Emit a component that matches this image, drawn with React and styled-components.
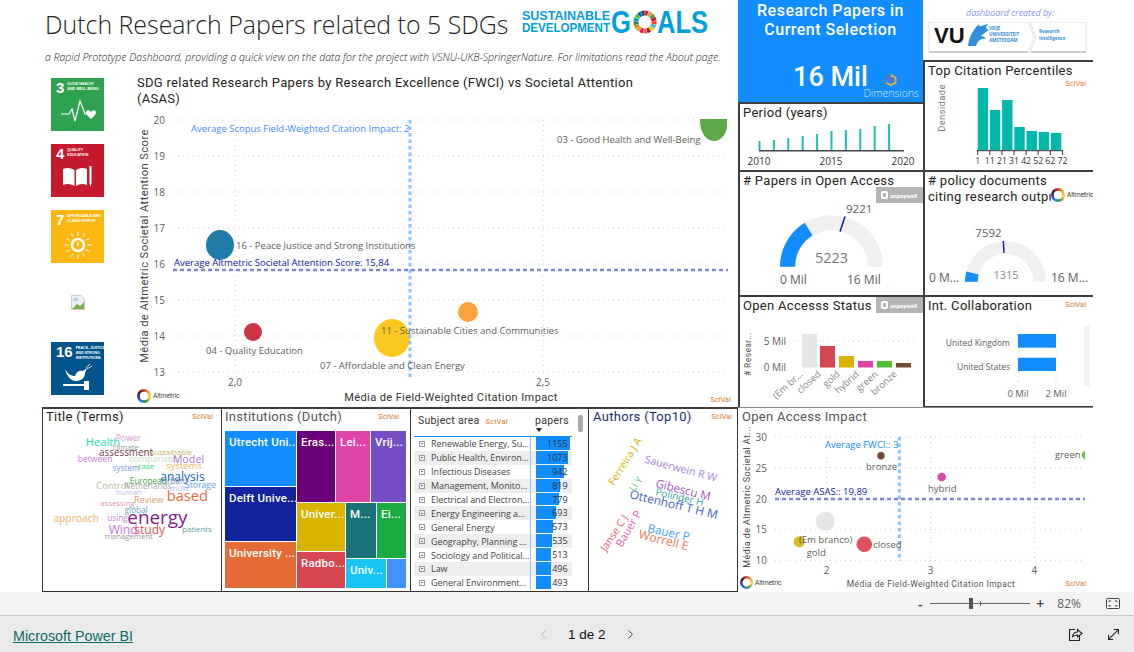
import React from 'react';
import styled, { createGlobalStyle } from 'styled-components';
import { MoveDiagonal, ChevronLeft, ChevronRight } from 'lucide-react';

const DIN = '"Roboto", "Liberation Sans", sans-serif';
const SEGOE = '"Open Sans", "Noto Sans", sans-serif';
const ARIAL = '"Liberation Sans", sans-serif';
const THICK = '2px solid #3f3f3f';
const THIN = '1px solid #333333';

const GlobalStyle = createGlobalStyle`
  html, body { margin: 0; padding: 0; background: #fff; overflow: hidden; }
  * { box-sizing: border-box; }
`;

const Page = styled.div`
  width: 1134px;
  height: 652px;
  display: flex;
  flex-direction: column;
  font-family: ${SEGOE};
`;

const Canvas = styled.div`
  height: 592px;
  display: flex;
  flex-direction: column;
  background: #fff;
`;

const TopRow = styled.div`
  height: 407px;
  display: flex;
`;

const LeftTop = styled.div`
  width: 738px;
  display: flex;
  flex-direction: column;
`;

const Header = styled.div`
  height: 45px;
  display: flex;
  align-items: flex-start;
  padding: 7px 0 0 45px;
`;

const PageTitle = styled.h1`
  margin: 0;
  width: 476px;
  font-family: ${SEGOE};
  font-weight: 300;
  font-size: 24.9px;
  line-height: 35px;
  color: #252423;
  white-space: nowrap;
`;

const Subtitle = styled.div`
  height: 27px;
  padding: 5px 0 0 45px;
  font-weight: 300;
  font-style: italic;
  font-size: 10.5px;
  line-height: 14px;
  color: #252423;
  white-space: nowrap;
`;

const MainBody = styled.div`
  height: 335px;
  display: flex;
`;

const SdgColumn = styled.div`
  width: 135px;
  padding: 6px 0 0 51px;
  display: flex;
  flex-direction: column;
  gap: 13px;
`;

const Tile = styled.div`
  width: 53px;
  height: 53px;
  padding: 2px 4px 0 5px;
  background: ${(p) => p.$bg};
  color: #fff;
  display: flex;
  flex-direction: column;
`;

const TileHead = styled.div`
  display: flex;
  gap: 3px;
  height: 19px;
  flex: none;
`;

const TileNum = styled.span`
  font-family: ${ARIAL};
  font-weight: 700;
  font-size: 15px;
  line-height: 16px;
`;

const TileLabel = styled.span`
  font-family: ${ARIAL};
  font-weight: 700;
  font-size: 3.6px;
  line-height: 5px;
  padding-top: 2px;
  white-space: nowrap;
`;

const TileIcon = styled.svg`
  display: block;
  align-self: center;
  flex: none;
`;

const BrokenSlot = styled.div`
  width: 53px;
  height: 53px;
  display: flex;
  align-items: center;
  justify-content: center;
`;

const MainChart = styled.div`
  position: relative;
  width: 603px;
  display: flex;
  flex-direction: column;
`;

const RightArea = styled.div`
  display: flex;
`;

const RightCol = styled.div`
  width: ${(p) => p.$w}px;
  display: flex;
  flex-direction: column;
`;

const Panel = styled.div`
  position: relative;
  overflow: hidden;
  width: ${(p) => p.$w}px;
  height: ${(p) => p.$h}px;
  flex: none;
  display: flex;
  flex-direction: column;
  background: #fff;
  border-top: ${(p) => p.$top || 'none'};
  border-left: ${(p) => p.$left || 'none'};
  border-bottom: ${(p) => p.$bottom || 'none'};
  border-right: ${(p) => p.$right || 'none'};
`;

const PanelTitle = styled.div`
  font-family: ${DIN};
  font-size: 13px;
  letter-spacing: 0.3px;
  line-height: 16px;
  padding: ${(p) => p.$pad || '1px 0 1px 3px'};
  color: ${(p) => p.$color || '#252423'};
  flex: none;
`;

const Kpi = styled.div`
  position: relative;
  width: 185px;
  height: 102px;
  background: #118dff;
  color: #fff;
  display: flex;
  flex-direction: column;
  align-items: center;
`;

const KpiTitle = styled.div`
  font-family: ${DIN};
  font-weight: 500;
  font-size: 16px;
  letter-spacing: 0.5px;
  line-height: 19px;
  padding-top: 1px;
  text-align: center;
`;

const KpiValue = styled.div`
  font-family: ${DIN};
  font-weight: 500;
  font-size: 27px;
  line-height: 34px;
  padding-top: 21px;
`;

const Dimensions = styled.div`
  position: absolute;
  right: 4px;
  bottom: 3px;
  display: flex;
  flex-direction: column;
  align-items: center;
  gap: 2px;
  font-family: ${SEGOE};
  font-weight: 300;
  font-size: 10.5px;
  line-height: 11px;
  color: #dcebff;
`;

const DimensionsMark = styled.svg`
  display: block;
`;

const Credit = styled.div`
  width: 170px;
  height: 60px;
  display: flex;
  flex-direction: column;
  align-items: flex-start;
  padding: 6px 0 0 5px;
  background: #fff;
`;

const CreditText = styled.div`
  font-family: ${SEGOE};
  font-weight: 300;
  font-style: italic;
  font-size: 9px;
  line-height: 13px;
  color: #3f63f0;
  padding: 0 0 3px 38px;
`;

const SciVal = styled.span`
  position: absolute;
  top: ${(p) => p.$t}px;
  right: ${(p) => p.$r}px;
  font-family: ${DIN};
  font-size: 7.5px;
  line-height: 9px;
  color: #e07a2e;
`;

const Paywall = styled.div`
  position: absolute;
  top: ${(p) => p.$t}px;
  right: 0;
  width: 47px;
  height: 16px;
  background: #b4b4b4;
  color: #fff;
  display: flex;
  align-items: center;
  gap: 2px;
  padding-left: 5px;
  font-family: ${DIN};
  font-weight: 700;
  font-size: 6px;
`;

const PaywallDot = styled.span`
  width: 7px;
  height: 8px;
  border-radius: 2px;
  border: 2px solid #fff;
`;

const Altmetric = styled.div`
  position: absolute;
  left: ${(p) => p.$l}px;
  ${(p) => (p.$b !== undefined ? `bottom: ${p.$b}px;` : `top: ${p.$t}px;`)}
  display: flex;
  align-items: center;
  gap: 2px;
  padding-right: 1px;
  background: #fff;
  font-family: ${DIN};
  font-size: 6.5px;
  color: #333;
`;

const AltRing = styled.span`
  width: ${(p) => p.$s}px;
  height: ${(p) => p.$s}px;
  border-radius: 50%;
  background:
    radial-gradient(circle, #fff 0 42%, transparent 46%),
    conic-gradient(#e53935, #f9a825, #fdd835, #43a047, #1e88e5, #5e35b1, #222, #e53935);
`;

const Chart = styled.svg`
  display: block;
  flex: none;
  text {
    font-family: ${SEGOE};
  }
`;

const LogoText = styled.text`
  && {
    font-family: ${ARIAL};
  }
  font-weight: 700;
  font-size: ${(p) => p.$size}px;
  fill: ${(p) => p.$color || '#00a0dc'};
`;

const AxisText = styled.text`
  font-size: ${(p) => p.$size || 10}px;
  fill: ${(p) => p.$color || '#605e5c'};
`;

const DinText = styled.text`
  && {
    font-family: ${DIN};
  }
  font-size: ${(p) => p.$size || 11}px;
  letter-spacing: ${(p) => p.$ls ?? 0.4}px;
  fill: ${(p) => p.$color || '#605e5c'};
`;

const BottomRow = styled.div`
  height: 185px;
  display: flex;
  padding-left: 42px;
`;

const Treemap = styled.div`
  width: 181px;
  height: 157px;
  margin: 1px 0 0 3px;
  display: flex;
  gap: 1px;
`;

const TreeCol = styled.div`
  width: ${(p) => p.$w}px;
  height: ${(p) => p.$h || 157}px;
  display: flex;
  flex-direction: column;
  gap: 1px;
`;

const TreeRow = styled.div`
  height: ${(p) => p.$h}px;
  display: flex;
  gap: 1px;
`;

const TreeCell = styled.div`
  flex: ${(p) => (p.$w ? `0 0 ${p.$w}px` : 'none')};
  height: ${(p) => p.$h}px;
  background: ${(p) => p.$bg};
  color: #fff;
  font-family: ${DIN};
  font-weight: 500;
  font-size: 11.5px;
  letter-spacing: 0.2px;
  line-height: 16px;
  padding: 3px 0 0 4px;
  overflow: hidden;
  white-space: nowrap;
`;

const TableHead = styled.div`
  position: relative;
  width: 158px;
  height: 28px;
  margin-left: 3px;
  display: flex;
  align-items: flex-start;
  padding-top: 5px;
  border-bottom: 1px solid #118dff;
  font-family: ${DIN};
  font-size: 10.5px;
  letter-spacing: 0.3px;
  line-height: 14px;
  color: #333;
`;

const SubjectHead = styled.span`
  width: 121px;
  padding-left: 4px;
`;

const Caret = styled.span`
  position: absolute;
  left: 122px;
  top: 19px;
  border-left: 3.5px solid transparent;
  border-right: 3.5px solid transparent;
  border-top: 4px solid #252423;
`;

const TableBody = styled.div`
  width: 158px;
  margin-left: 3px;
  display: flex;
  flex-direction: column;
`;

const Row = styled.div`
  height: 13.9px;
  display: grid;
  grid-template-columns: 17px 99px 1fr;
  align-items: center;
  background: ${(p) => (p.$alt ? '#eeeeee' : 'transparent')};
  font-size: 9px;
  letter-spacing: -0.05px;
  color: #444;
`;

const Expander = styled.span`
  width: 6px;
  height: 6px;
  margin-left: 5px;
  border: 1px solid #999;
  position: relative;
  &::after {
    content: '';
    position: absolute;
    left: 1px;
    right: 1px;
    top: 1.5px;
    height: 1px;
    background: #777;
  }
`;

const RowName = styled.span`
  overflow: hidden;
  text-overflow: ellipsis;
  white-space: nowrap;
`;

const ValueCell = styled.span`
  position: relative;
  height: 100%;
  border-left: 1px solid #8fc6ff;
  padding-right: 4.5px;
  text-align: right;
  line-height: 13.9px;
`;

const DataBar = styled.span`
  position: absolute;
  left: 5px;
  top: 0;
  bottom: 1px;
  background: #118dff;
`;

const ValueText = styled.span`
  position: relative;
  color: #333;
`;

const ScrollThumb = styled.span`
  position: absolute;
  left: 167px;
  top: 6px;
  width: 5px;
  height: 17px;
  border-radius: 2px;
  background: #a9a9a9;
`;

const ZoomBar = styled.div`
  height: 24px;
  background: #f3f3f3;
  border-bottom: 1px solid #c8c8c8;
  display: flex;
  align-items: center;
  justify-content: flex-end;
  padding-right: 14px;
  color: #444;
`;

const ZoomSign = styled.span`
  font-family: ${SEGOE};
  font-weight: 600;
  font-size: 14px;
  line-height: 14px;
  width: 12px;
  text-align: center;
`;

const Slider = styled.div`
  position: relative;
  width: 100px;
  height: 1px;
  margin: 0 4px;
  background: #666;
`;

const Thumb = styled.span`
  position: absolute;
  left: 39px;
  top: -5px;
  width: 4px;
  height: 11px;
  background: #555;
`;

const Tick = styled.span`
  position: absolute;
  left: 50px;
  top: -2px;
  width: 1px;
  height: 5px;
  background: #666;
`;

const ZoomValue = styled.span`
  font-size: 12px;
  margin: 0 25px 0 11px;
  color: #605e5c;
`;

const Footer = styled.div`
  position: relative;
  height: 36px;
  background: #eaeaea;
  display: flex;
  align-items: center;
  justify-content: space-between;
  padding: 0 12px 0 13px;
`;

const BiLink = styled.a`
  font-family: ${ARIAL};
  font-size: 14.3px;
  padding-top: 3px;
  color: #0f6b6b;
  text-decoration: underline;
`;

const Pager = styled.div`
  position: absolute;
  left: 536px;
  top: 0;
  height: 36px;
  display: flex;
  align-items: center;
  gap: 17px;
  font-family: ${ARIAL};
  font-size: 13.5px;
  color: #111;
`;

const FooterIcons = styled.div`
  display: flex;
  align-items: center;
  gap: 22px;
`;

const NavBtn = styled.span`
  display: flex;
  color: ${(p) => p.$color};
`;

/* helpers ------------------------------------------------------------ */

const Plot = ({ x, y, w, h, children }) => (
  <Chart width={w} height={h} viewBox={`${x} ${y} ${w} ${h}`}>
    {children}
  </Chart>
);

const arc = (cx, cy, ro, ri, f0, f1) => {
  const p = (r, f) => {
    const a = Math.PI * (1 - f);
    return `${(cx + r * Math.cos(a)).toFixed(2)} ${(cy - r * Math.sin(a)).toFixed(2)}`;
  };
  return `M${p(ro, f0)} A${ro} ${ro} 0 0 1 ${p(ro, f1)} L${p(ri, f1)} A${ri} ${ri} 0 0 0 ${p(ri, f0)} Z`;
};

const SDG_COLORS = ['#e5243b', '#dda63a', '#4c9f38', '#c5192d', '#ff3a21', '#26bde2', '#fcc30b', '#a21942', '#fd6925', '#dd1367', '#fd9d24', '#bf8b2e', '#3f7e44', '#0a97d9', '#56c02b', '#00689d', '#19486a'];

const SdgLogo = () => {
  const cx = 645;
  const cy = 22;
  const R = 11.5;
  const r = 6.5;
  return (
    <Chart width={187} height={38} viewBox="521 7 187 38">
      <LogoText x="522" y="20" $size={13} textLength="88" lengthAdjust="spacingAndGlyphs">SUSTAINABLE</LogoText>
      <LogoText x="522" y="32" $size={13} textLength="88" lengthAdjust="spacingAndGlyphs">DEVELOPMENT</LogoText>
      <LogoText transform="translate(611 33) scale(0.8 1)" $size={32}>G</LogoText>
      {SDG_COLORS.map((c, i) => {
        const a0 = (i / 17) * Math.PI * 2 - Math.PI / 2;
        const a1 = ((i + 0.9) / 17) * Math.PI * 2 - Math.PI / 2;
        const d = `M${cx + R * Math.cos(a0)} ${cy + R * Math.sin(a0)} A${R} ${R} 0 0 1 ${cx + R * Math.cos(a1)} ${cy + R * Math.sin(a1)} L${cx + r * Math.cos(a1)} ${cy + r * Math.sin(a1)} A${r} ${r} 0 0 0 ${cx + r * Math.cos(a0)} ${cy + r * Math.sin(a0)} Z`;
        return <path key={i} d={d} fill={c} />;
      })}
      <LogoText x="657" y="33" $size={32} textLength="51" lengthAdjust="spacingAndGlyphs">ALS</LogoText>
    </Chart>
  );
};

const VuLogo = () => (
  <Chart width={160} height={32} viewBox="0 0 160 32">
    <path d="M1 0H100L106 15L100 30H1Z" fill="#fff" stroke="#e2e2e2" />
    <path d="M102 0H158V30H102L108 15Z" fill="#fff" stroke="#e2e2e2" />
    <rect x="1" y="29" width="99" height="2" fill="#ccc" />
    <rect x="103" y="29" width="55" height="2" fill="#ccc" />
    <LogoText x="6" y="21" $size={22} $color="#111">VU</LogoText>
    <path d="M40 24C41 15 45 8 51 2C50 6 53 4 60 2C56 7 59 7 61 8C57 10 55 13 52 14C55 14 57 15 58 17C53 16 50 18 48 24Z" fill="#2f8fd8" />
    <g fill="#2f8fd8" fontSize="4.5" fontWeight="700">
      <text x="61" y="8">VRIJE</text>
      <text x="61" y="14">UNIVERSITEIT</text>
      <text x="61" y="20">AMSTERDAM</text>
      <text x="111" y="11">Research</text>
      <text x="111" y="18">Intelligence</text>
    </g>
  </Chart>
);

const HeartIcon = () => (
  <TileIcon width="36" height="26" viewBox="0 0 36 26">
    <path d="M1 15H9L12 10L15 22L20 2L25 15H27" fill="none" stroke="#fff" strokeWidth="1.2" />
    <path d="M31 20C28 17 26 15.5 26 13.5C26 11 29 10.5 31 13C33 10.5 36 11 36 13.5C36 15.5 34 17 31 20Z" fill="#fff" />
  </TileIcon>
);

const BookIcon = () => (
  <TileIcon width="30" height="24" viewBox="0 0 30 24">
    <path d="M0 4C4 2 8 3 11.5 5V21C8 19 4 18 0 20ZM13 5C16 3 20 2 24 4V20C20 18 16 19 13 21Z" fill="#fff" />
    <path d="M26.5 1H28.5V18L27.5 22L26.5 18Z" fill="#fff" />
  </TileIcon>
);

const SunIcon = () => (
  <TileIcon width="30" height="28" viewBox="0 0 30 28">
    <circle cx="15" cy="14" r="6" fill="none" stroke="#fff" strokeWidth="2.5" />
    <path d="M15 11V15" stroke="#fff" strokeWidth="1.5" />
    {Array.from({ length: 12 }).map((_, i) => {
      const a = (i / 12) * Math.PI * 2;
      return <line key={i} x1={15 + 9.5 * Math.cos(a)} y1={14 + 9.5 * Math.sin(a)} x2={15 + 13.5 * Math.cos(a)} y2={14 + 13.5 * Math.sin(a)} stroke="#fff" strokeWidth="1" />;
    })}
  </TileIcon>
);

const DoveIcon = () => (
  <TileIcon width="30" height="27" viewBox="0 0 30 27">
    <path d="M2 6C5 11 8 13 12 13C13 9 16 7 20 8L24 5L22 10C22 15 18 18 13 18C8 18 4 14 2 6Z" fill="#fff" />
    <path d="M0 21H21V23H0Z" fill="#fff" />
    <path d="M21 18H26V27H21Z" fill="#fff" />
    <path d="M23 5L27 1M24 6L29 3" stroke="#fff" strokeWidth="0.8" />
  </TileIcon>
);

const BrokenImage = () => (
  <svg width="14" height="15" viewBox="0 0 14 15">
    <path d="M0.5 0.5H10L13.5 4V14.5H0.5Z" fill="#eef2f6" stroke="#c8ccd0" />
    <path d="M1 14L6 9L9 11L13 7V14Z" fill="#7fae4e" />
    <path d="M2 3H7V6H2Z" fill="#b9d0ea" />
  </svg>
);

const FitIcon = () => (
  <svg width="14" height="11" viewBox="0 0 14 11" fill="none" stroke="#444" strokeWidth="1">
    <rect x="0.5" y="0.5" width="13" height="10" rx="1" />
    <path d="M3 4V3H5M9 3H11V4M11 7V8H9M5 8H3V7" />
  </svg>
);

const ShareIcon = () => (
  <svg width="15" height="15" viewBox="0 0 15 15" fill="none" stroke="#222" strokeWidth="1.1">
    <path d="M7 2.5H1.5V13.5H11.5V9" />
    <path d="M4.5 9.5C5 6.5 7 5 9.5 5V2.5L14 6.5L9.5 10V8C7.5 8 6 8.5 4.5 9.5Z" />
  </svg>
);

const AltBadge = ({ l, t, b, s }) => (
  <Altmetric $l={l} $t={t} $b={b}>
    <AltRing $s={s} />
    Altmetric
  </Altmetric>
);

/* data --------------------------------------------------------------- */

const BUBBLES = [
  { cx: 714, cy: 121, rx: 14, ry: 20, c: '#5da74a' },
  { cx: 220, cy: 245, rx: 14, ry: 15, c: '#1f7ba8' },
  { cx: 253, cy: 332, rx: 9, ry: 9, c: '#cf3244' },
  { cx: 392, cy: 338, rx: 18, ry: 19, c: '#fdc820' },
  { cx: 468, cy: 312, rx: 10, ry: 10, c: '#fda53a' },
];

const MAIN_LABELS = [
  { x: 557, y: 143, t: '03 - Good Health and Well-Being' },
  { x: 236, y: 249, t: '16 - Peace Justice and Strong Institutions' },
  { x: 381, y: 334, t: '11 - Sustainable Cities and Communities' },
  { x: 206, y: 354, t: '04 - Quality Education' },
  { x: 320, y: 369, t: '07 - Affordable and Clean Energy' },
];

const CITATION_BARS = [88, 110, 100, 127, 131, 132, 133];
const CITATION_TICKS = ['1', '11', '21', '31', '42', '52', '62', '72'];
const PERIOD_BARS = [141, 140, 138, 136, 134, 131, 130, 129, 126, 124];

const OA_BARS = [
  { x: 802, w: 15, top: 334, c: '#e6e6e6', l: '(Em br...' },
  { x: 820, w: 15, top: 346, c: '#d64550', l: 'closed' },
  { x: 839, w: 15, top: 356, c: '#d9b300', l: 'gold' },
  { x: 858, w: 15, top: 361, c: '#e044a7', l: 'hybrid' },
  { x: 877, w: 15, top: 361, c: '#4fbf2f', l: 'green' },
  { x: 896, w: 15, top: 363, c: '#744a33', l: 'bronze' },
];

const WORDS = [
  ['Health', 85.7, 446, 13, '#19e0b4'], ['Power', 115.7, 441, 10, '#dc96e4'], ['climate', 112.7, 449.7, 9, '#9a9a9a'],
  ['assessment', 99, 456, 11.5, '#74384a'], ['sustainable', 151, 454.7, 9, '#c9b368'], ['between', 77.7, 461.7, 10, '#d074e0'],
  ['comparison', 129, 461.7, 10.5, '#bce2bc'], ['Model', 172.7, 463, 12.5, '#b274d2'], ['system', 112.7, 470.7, 9.5, '#7494d8'],
  ['case', 138, 468.7, 9, '#34e074'], ['systems', 166, 468.7, 11, '#f2b464'], ['analysis', 160.3, 480.7, 14, '#1262b2'],
  ['European', 129.7, 484, 9.5, '#44a444'], ['Urban', 161, 484.3, 9.5, '#7484c2'], ['Storage', 185, 488.3, 10, '#64a4f2'],
  ['Control', 96, 489, 11, '#c2baa2'], ['Netherlands', 124.3, 489.3, 9.5, '#aaaaaa'], ['multi', 170, 490.7, 9, '#b4b4f2'],
  ['human', 116, 494.7, 9, '#b2bada'], ['based', 166.7, 500.7, 17, '#e86c40'], ['Review', 134, 502.7, 10.5, '#d8a274'],
  ['assessing', 100.3, 506, 9, '#e294c2'], ['global', 124.7, 513, 9.5, '#64a2c2'], ['approach', 53.3, 521.7, 12, '#f8b264'],
  ['using', 107.3, 520.7, 9.5, '#c284d2'], ['energy', 127.3, 524.3, 22, '#80208c'], ['Wind', 108.7, 534.3, 14, '#c274d8'],
  ['study', 134.3, 534.3, 14, '#e05454'], ['patients', 182.3, 532, 9, '#64a2a2'], ['management', 104.7, 538.7, 9, '#9a9a9a'],
];

const AUTHORS = [
  ['Ferreira J A', 614, 486, -58, 10.5, '#d9b300'], ['Sauerwein R W', 644, 462.5, 15, 10.7, '#a484e2'],
  ['Li Y', 634, 492, -55, 9.5, '#4fbf6f'], ['Gibescu M', 655, 487, 14, 11.5, '#a454c2'],
  ['Polinder H', 655, 495, 13, 10, '#34a2a2'], ['Ottenhoff T H M', 629, 498, 13.5, 12, '#4464c2'],
  ['Janse C J', 606, 552, -57, 10.5, '#e26474'], ['Bauer P', 622, 548, -60, 11, '#e264b2'],
  ['Bauer P', 647, 532, 12, 11.7, '#44a2ff'], ['Worrell E', 638, 538, 14, 12, '#f27454'],
];

const SUBJECTS = [
  ['Renewable Energy, Sustainability', 1155], ['Public Health, Environmental', 1073], ['Infectious Diseases', 942],
  ['Management, Monitoring, Policy', 819], ['Electrical and Electronic Eng.', 779], ['Energy Engineering and Power', 693],
  ['General Energy', 573], ['Geography, Planning and Dev.', 535], ['Sociology and Political Science', 513],
  ['Law', 496], ['General Environmental Science', 493],
];

const IMPACT_BUBBLES = [
  { cx: 881, cy: 455.7, r: 3.7, c: '#744a33' }, { cx: 941.7, cy: 477, r: 4.3, c: '#e044a7' },
  { cx: 1086, cy: 455, r: 4.2, c: '#5fc53a' }, { cx: 825.3, cy: 521.3, r: 9.5, c: '#e6e6e6' },
  { cx: 799.3, cy: 541.7, r: 5.5, c: '#dcba1c' }, { cx: 864.3, cy: 544.3, r: 7.8, c: '#e0525e' },
];

const IMPACT_LABELS = [
  ['bronze', 866, 470], ['hybrid', 928, 492], ['green', 1055, 458],
  ['(Em branco)', 799, 542.7], ['gold', 806.7, 555.7], ['closed', 873.3, 548.3],
];

/* app ---------------------------------------------------------------- */

export default function App() {
  return (
    <Page>
      <GlobalStyle />
      <Canvas>
        <TopRow>
          <LeftTop>
            <Header>
              <PageTitle>Dutch Research Papers related to 5 SDGs</PageTitle>
              <SdgLogo />
            </Header>
            <Subtitle>a Rapid Prototype Dashboard, providing a quick view on the data for the project with VSNU-UKB-SpringerNature. For limitations read the About page.</Subtitle>
            <MainBody>
              <SdgColumn>
                <Tile $bg="#2ea24f">
                  <TileHead><TileNum>3</TileNum><TileLabel>GOOD HEALTH<br />AND WELL-BEING</TileLabel></TileHead>
                  <HeartIcon />
                </Tile>
                <Tile $bg="#c5192d">
                  <TileHead><TileNum>4</TileNum><TileLabel>QUALITY<br />EDUCATION</TileLabel></TileHead>
                  <BookIcon />
                </Tile>
                <Tile $bg="#fdb713">
                  <TileHead><TileNum>7</TileNum><TileLabel>AFFORDABLE AND<br />CLEAN ENERGY</TileLabel></TileHead>
                  <SunIcon />
                </Tile>
                <BrokenSlot><BrokenImage /></BrokenSlot>
                <Tile $bg="#02558b">
                  <TileHead><TileNum>16</TileNum><TileLabel>PEACE, JUSTICE<br />AND STRONG<br />INSTITUTIONS</TileLabel></TileHead>
                  <DoveIcon />
                </Tile>
              </SdgColumn>
              <MainChart>
                <PanelTitle $pad="3px 90px 0 2px">SDG related Research Papers by Research Excellence (FWCI) vs Societal Attention (ASAS)</PanelTitle>
                <Plot x={135} y={107} w={603} h={300}>
                  <defs>
                    <clipPath id="mainclip"><rect x="173" y="119" width="554" height="261" /></clipPath>
                  </defs>
                  {[20, 19, 18, 17, 16, 15, 14, 13].map((v, i) => (
                    <g key={v}>
                      <line x1="173" x2="728" y1={120 + i * 36} y2={120 + i * 36} stroke="#cfcfcf" strokeDasharray="1 4" />
                      <AxisText x="165" y={124 + i * 36} textAnchor="end" $size={10}>{v}</AxisText>
                    </g>
                  ))}
                  {[[235, '2,0'], [543, '2,5']].map(([x, t]) => (
                    <g key={t}>
                      <line x1={x} x2={x} y1="120" y2="372" stroke="#cfcfcf" strokeDasharray="1 4" />
                      <AxisText x={x} y="386" textAnchor="middle" $size={10}>{t}</AxisText>
                    </g>
                  ))}
                  <g clipPath="url(#mainclip)">
                    {BUBBLES.map((b) => <ellipse key={b.cx} cx={b.cx} cy={b.cy} rx={b.rx} ry={b.ry} fill={b.c} />)}
                  </g>
                  <line x1="410" x2="410" y1="120" y2="378" stroke="#8cc4ff" strokeWidth="3" strokeDasharray="3.5 3" />
                  <line x1="173" x2="728" y1="270" y2="270" stroke="#7f86d4" strokeWidth="2.5" strokeDasharray="4 3" />
                  <AxisText x="191" y="132" $size={9.5} $color="#3d8bff">Average Scopus Field-Weighted Citation Impact: 2</AxisText>
                  <AxisText x="174" y="266" $size={9.5} $color="#12239e">Average Altmetric Societal Attention Score: 15,84</AxisText>
                  {MAIN_LABELS.map((l) => <AxisText key={l.t} x={l.x} y={l.y} $size={9.5}>{l.t}</AxisText>)}
                  <DinText transform="translate(148 246) rotate(-90)" textAnchor="middle" $size={11.2} $color="#444">Média de Altmetric Societal Attention Score</DinText>
                  <DinText x="451" y="401" textAnchor="middle" $size={11} $color="#333">Média de Field-Weighted Citation Impact</DinText>
                </Plot>
                <AltBadge l={2} b={4} s={14} />
                <SciVal $t={323} $r={7}>SciVal</SciVal>
              </MainChart>
            </MainBody>
          </LeftTop>
          <RightArea>
            <RightCol $w={185}>
              <Kpi>
                <KpiTitle>Research Papers in<br />Current Selection</KpiTitle>
                <KpiValue>16 Mil</KpiValue>
                <Dimensions>
                  <DimensionsMark width="12" height="12" viewBox="0 0 13 13">
                    <path d="M6.5 1L11.5 4V9.5L6.5 12L1.5 9.5V4Z" fill="none" stroke="#f2a93b" strokeWidth="2" />
                    <path d="M6.5 1L1.5 4V9.5" fill="none" stroke="#3f6fd0" strokeWidth="2" />
                    <circle cx="6.5" cy="6.5" r="1.6" fill="#d64550" />
                  </DimensionsMark>
                  Dimensions
                </Dimensions>
              </Kpi>
              <Panel $w={185} $h={68} $top={THICK} $left={THICK}>
                <PanelTitle>Period (years)</PanelTitle>
                <Plot x={740} y={122} w={183} h={46}>
                  {PERIOD_BARS.map((top, i) => (
                    <rect key={i} x={758.5 + i * 14.4} y={top} width="2" height={150 - top} fill="#19c3b0" />
                  ))}
                  <line x1="759" x2="904" y1="150.7" y2="150.7" stroke="#444" strokeWidth="1.5" />
                  {[[759, '2010'], [831, '2015'], [903, '2020']].map(([x, t]) => (
                    <AxisText key={t} x={x} y="165" textAnchor="middle" $size={10} $color="#333">{t}</AxisText>
                  ))}
                </Plot>
              </Panel>
              <Panel $w={185} $h={125} $top={THICK} $left={THICK}>
                <PanelTitle># Papers in Open Access</PanelTitle>
                <Plot x={740} y={190} w={183} h={103}>
                  <path d={arc(831.5, 266.7, 51.5, 36.5, 0, 1)} fill="#f1f0ef" />
                  <path d={arc(831.5, 266.7, 51.5, 36.5, 0, 0.326)} fill="#118dff" />
                  <line x1="845" y1="216.6" x2="840" y2="231.7" stroke="#12239e" strokeWidth="1.5" />
                  <AxisText x="846" y="213" $size={11.5}>9221</AxisText>
                  <AxisText x="831.5" y="263" textAnchor="middle" $size={14.5} $color="#777">5223</AxisText>
                  <AxisText x="780" y="284" $size={12}>0 Mil</AxisText>
                  <AxisText x="847" y="284" $size={12}>16 Mil</AxisText>
                </Plot>
                <Paywall $t={15}><PaywallDot />unpaywall</Paywall>
              </Panel>
              <Panel $w={185} $h={112} $top={THICK} $left={THICK}>
                <PanelTitle>Open Accesss Status</PanelTitle>
                <Plot x={740} y={315} w={183} h={90}>
                  <line x1="793" x2="916" y1="341" y2="341" stroke="#cfcfcf" strokeDasharray="1 4" />
                  {OA_BARS.map((b) => (
                    <g key={b.l}>
                      <rect x={b.x} y={b.top} width={b.w} height={367.5 - b.top} fill={b.c} />
                      <AxisText transform={`translate(${b.x + 1.5} 375) rotate(-42)`} textAnchor="end" $size={9.5} $color="#8a8886">{b.l}</AxisText>
                    </g>
                  ))}
                  <AxisText x="786" y="345" textAnchor="end" $size={10}>5 Mil</AxisText>
                  <AxisText x="786" y="371" textAnchor="end" $size={10}>0 Mil</AxisText>
                  <DinText transform="translate(751 354) rotate(-90)" textAnchor="middle" $size={8.5} $color="#555"># Resear...</DinText>
                </Plot>
                <Paywall $t={0}><PaywallDot />unpaywall</Paywall>
              </Panel>
            </RightCol>
            <RightCol $w={170}>
              <Credit>
                <CreditText>dashboard created by:</CreditText>
                <VuLogo />
              </Credit>
              <Panel $w={170} $h={110} $top={THICK} $left={THICK}>
                <PanelTitle>Top Citation Percentiles</PanelTitle>
                <Plot x={925} y={80} w={168} h={88}>
                  {CITATION_BARS.map((top, i) => (
                    <rect key={i} x={977.7 + i * 12.2} y={top} width="10.4" height={150 - top} fill="#01b8aa" />
                  ))}
                  <line x1="977.5" x2="1062" y1="150.7" y2="150.7" stroke="#333" strokeWidth="1" />
                  {CITATION_TICKS.map((t, i) => (
                    <g key={t}>
                      <line x1={977.7 + i * 12.1} x2={977.7 + i * 12.1} y1="150" y2="155" stroke="#333" />
                      <AxisText x={977.7 + i * 12.1} y="164" textAnchor="middle" $size={8.7} $color="#333">{t}</AxisText>
                    </g>
                  ))}
                  <DinText transform="translate(945 108) rotate(-90)" textAnchor="middle" $size={9.4} $color="#777">Densidade</DinText>
                </Plot>
                <SciVal $t={17} $r={7}>SciVal</SciVal>
              </Panel>
              <Panel $w={170} $h={125} $top={THICK} $left={THICK}>
                <PanelTitle>
                  # policy documents<br />citing research output
                </PanelTitle>
                <Plot x={925} y={206} w={168} h={87}>
                  <path d={arc(1005.5, 281.7, 40.5, 27.8, 0, 1)} fill="#f1f0ef" />
                  <path d={arc(1005.5, 281.7, 40.5, 27.8, 0, 0.082)} fill="#118dff" />
                  <line x1="1003.3" y1="241" x2="1004" y2="253" stroke="#12239e" strokeWidth="1.5" />
                  <AxisText x="988.5" y="237" textAnchor="middle" $size={11.5}>7592</AxisText>
                  <AxisText x="1006" y="279" textAnchor="middle" $size={11} $color="#888">1315</AxisText>
                  <AxisText x="929" y="282" $size={12}>0 M...</AxisText>
                  <AxisText x="1051" y="282" $size={12}>16 M...</AxisText>
                </Plot>
                <AltBadge l={126} t={16} s={14} />
              </Panel>
              <Panel $w={170} $h={112} $top={THICK} $left={THICK} $bottom={THIN}>
                <PanelTitle>Int. Collaboration</PanelTitle>
                <Plot x={925} y={315} w={168} h={90}>
                  <line x1="1018" x2="1018" y1="326" y2="382" stroke="#cfcfcf" strokeDasharray="1 4" />
                  <line x1="1056" x2="1056" y1="326" y2="382" stroke="#cfcfcf" strokeDasharray="1 4" />
                  <rect x="1018" y="334" width="38" height="13.7" fill="#118dff" />
                  <rect x="1018" y="357.7" width="38" height="13.3" fill="#118dff" />
                  <AxisText x="1010" y="346" textAnchor="end" $size={8.5}>United Kingdom</AxisText>
                  <AxisText x="1010" y="370" textAnchor="end" $size={8.5}>United States</AxisText>
                  <AxisText x="1018" y="397" textAnchor="middle" $size={9.5}>0 Mil</AxisText>
                  <AxisText x="1056" y="397" textAnchor="middle" $size={9.5}>2 Mil</AxisText>
                  <rect x="1084" y="326" width="6" height="60" fill="#f3f3f3" />
                </Plot>
                <SciVal $t={3} $r={7}>SciVal</SciVal>
              </Panel>
            </RightCol>
          </RightArea>
        </TopRow>
        <BottomRow>
          <Panel $w={179} $h={185} $top={THICK} $left={THIN} $bottom={THIN}>
            <PanelTitle $pad="0 0 1px 3px">Title (Terms)</PanelTitle>
            <Plot x={43} y={426} w={178} h={164}>
              {WORDS.map(([t, x, y, s, c]) => <AxisText key={t} x={x} y={y} $size={s * 0.86} $color={c}>{t}</AxisText>)}
            </Plot>
            <SciVal $t={3} $r={8}>SciVal</SciVal>
          </Panel>
          <Panel $w={189} $h={185} $top={THICK} $left={THIN} $bottom={THIN}>
            <PanelTitle $pad="0 0 5px 3px" $color="#555">Institutions (Dutch)</PanelTitle>
            <Treemap>
              <TreeCol $w={71}>
                <TreeCell $bg="#118dff" $h={55}>Utrecht Uni...</TreeCell>
                <TreeCell $bg="#12239e" $h={54}>Delft Unive...</TreeCell>
                <TreeCell $bg="#e66c37" $h={46}>University ...</TreeCell>
              </TreeCol>
              <TreeCol $w={109}>
                <TreeRow $h={71}>
                  <TreeCell $bg="#6b007b" $h={71} $w={38}>Eras...</TreeCell>
                  <TreeCell $bg="#e044a7" $h={71} $w={34}>Lei...</TreeCell>
                  <TreeCell $bg="#744ec2" $h={71} $w={35}>Vrij...</TreeCell>
                </TreeRow>
                <TreeRow $h={85}>
                  <TreeCol $w={48} $h={85}>
                    <TreeCell $bg="#d9b300" $h={48}>Univer...</TreeCell>
                    <TreeCell $bg="#d64550" $h={36}>Radbo...</TreeCell>
                  </TreeCol>
                  <TreeCol $w={60} $h={85}>
                    <TreeRow $h={55}>
                      <TreeCell $bg="#197278" $h={55} $w={30}>M...</TreeCell>
                      <TreeCell $bg="#1aab40" $h={55} $w={29}>Ei...</TreeCell>
                    </TreeRow>
                    <TreeRow $h={29}>
                      <TreeCell $bg="#15c6f4" $h={29} $w={40}>Univ...</TreeCell>
                      <TreeCell $bg="#4092ff" $h={29} $w={19} />
                    </TreeRow>
                  </TreeCol>
                </TreeRow>
              </TreeCol>
            </Treemap>
            <SciVal $t={3} $r={11}>SciVal</SciVal>
          </Panel>
          <Panel $w={178} $h={185} $top={THICK} $left={THIN} $bottom={THIN}>
            <TableHead>
              <SubjectHead>Subject area</SubjectHead>
              <span>papers</span>
              <Caret />
              <SciVal $t={8} $r={64}>SciVal</SciVal>
            </TableHead>
            <TableBody>
              {SUBJECTS.map(([name, v], i) => (
                <Row key={name} $alt={i % 2 === 1}>
                  <Expander />
                  <RowName>{name}</RowName>
                  <ValueCell>
                    <DataBar style={{ width: (v / 1155) * 34 }} />
                    <ValueText>{v}</ValueText>
                  </ValueCell>
                </Row>
              ))}
            </TableBody>
            <ScrollThumb />
          </Panel>
          <Panel $w={150} $h={185} $top={THICK} $left={THIN} $bottom={THIN} $right={THIN}>
            <PanelTitle $pad="0 0 1px 4px" $color="#1c2f6e">Authors (Top10)</PanelTitle>
            <Plot x={589} y={426} w={148} h={164}>
              {AUTHORS.map(([t, x, y, a, s, c]) => (
                <AxisText key={t + x} transform={`translate(${x} ${y}) rotate(${a})`} $size={s} $color={c}>{t}</AxisText>
              ))}
            </Plot>
            <SciVal $t={3} $r={5}>SciVal</SciVal>
          </Panel>
          <Panel $w={355} $h={185} $top="1px solid #8a8a8a">
            <PanelTitle $pad="1px 0 1px 4px" $color="#555">Open Access Impact</PanelTitle>
            <Plot x={738} y={426} w={355} h={166}>
              <defs>
                <clipPath id="oaclip"><rect x="775" y="430" width="310" height="140" /></clipPath>
              </defs>
              {[[30, 437], [25, 467.7], [20, 499], [15, 529.3], [10, 560.3]].map(([v, y]) => (
                <g key={v}>
                  <line x1="775" x2="1085" y1={y} y2={y} stroke="#cfcfcf" strokeDasharray="1 4" />
                  <AxisText x="767" y={y + 4} textAnchor="end" $size={10}>{v}</AxisText>
                </g>
              ))}
              {[[826.7, '2'], [930.7, '3'], [1034.3, '4']].map(([x, t]) => (
                <g key={t}>
                  <line x1={x} x2={x} y1="437" y2="560" stroke="#cfcfcf" strokeDasharray="1 4" />
                  <AxisText x={x} y="574" textAnchor="middle" $size={10}>{t}</AxisText>
                </g>
              ))}
              <g clipPath="url(#oaclip)">
                {IMPACT_BUBBLES.map((b) => <circle key={b.cx} cx={b.cx} cy={b.cy} r={b.r} fill={b.c} />)}
              </g>
              <line x1="899.3" x2="899.3" y1="437" y2="561" stroke="#8cc4ff" strokeWidth="3" strokeDasharray="3.5 3" />
              <line x1="775" x2="1085" y1="499" y2="499" stroke="#7f86d4" strokeWidth="2.5" strokeDasharray="4 3" />
              <AxisText x="825" y="448" $size={9.5} $color="#118dff">Average FWCI:: 3</AxisText>
              <AxisText x="775" y="495" $size={9.5} $color="#12239e">Average ASAS:: 19,89</AxisText>
              {IMPACT_LABELS.map(([t, x, y]) => <AxisText key={t} x={x} y={y} $size={9.5}>{t}</AxisText>)}
              <DinText transform="translate(750 497) rotate(-90)" textAnchor="middle" $size={9} $color="#444">Média de Altmetric Societal At...</DinText>
              <DinText x="931" y="587" textAnchor="middle" $size={8.5} $color="#555">Média de Field-Weighted Citation Impact</DinText>
            </Plot>
            <AltBadge l={2} b={3} s={13} />
            <SciVal $t={171} $r={7}>SciVal</SciVal>
          </Panel>
        </BottomRow>
      </Canvas>
      <ZoomBar>
        <ZoomSign>-</ZoomSign>
        <Slider><Thumb /><Tick /></Slider>
        <ZoomSign>+</ZoomSign>
        <ZoomValue>82%</ZoomValue>
        <FitIcon />
      </ZoomBar>
      <Footer>
        <BiLink href="#">Microsoft Power BI</BiLink>
        <Pager>
          <NavBtn $color="#b5b5b5"><ChevronLeft size={15} strokeWidth={1.5} /></NavBtn>
          <span>1 de 2</span>
          <NavBtn $color="#333"><ChevronRight size={15} strokeWidth={1.5} /></NavBtn>
        </Pager>
        <FooterIcons>
          <ShareIcon />
          <MoveDiagonal size={17} strokeWidth={1.5} color="#222" />
        </FooterIcons>
      </Footer>
    </Page>
  );
}
